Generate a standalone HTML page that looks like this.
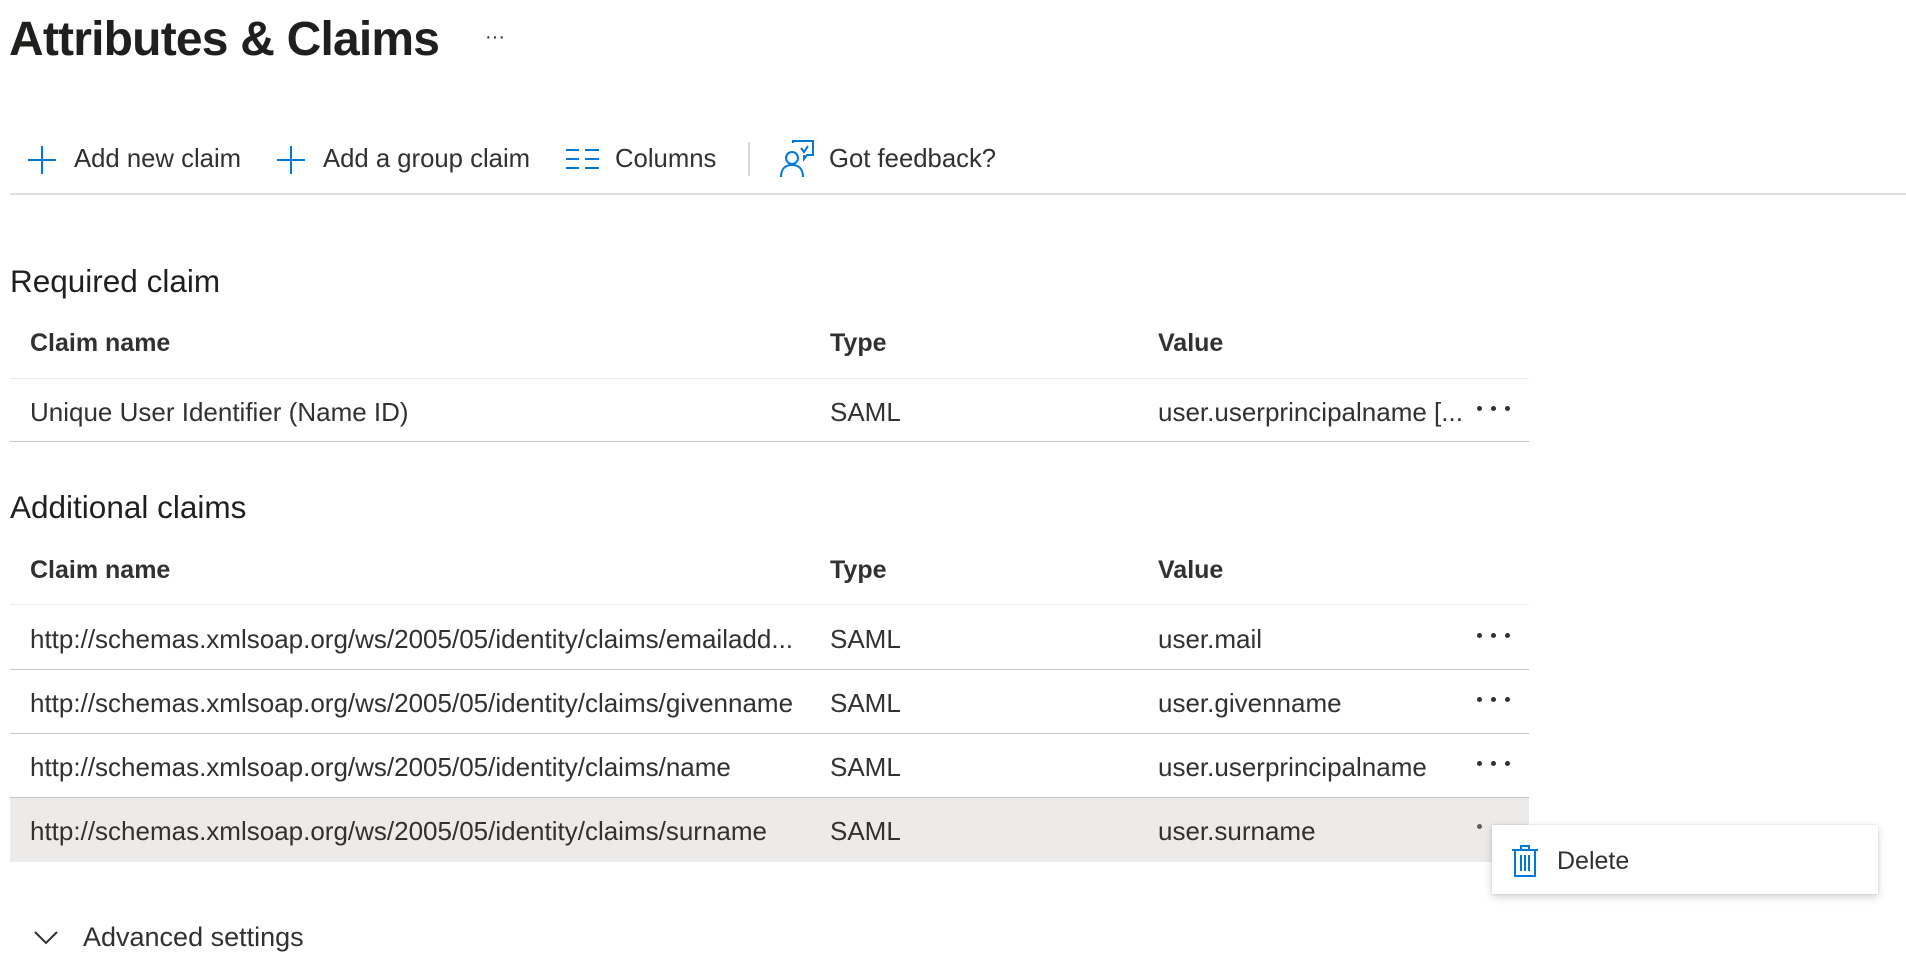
<!DOCTYPE html>
<html><head><meta charset="utf-8">
<style>
*{margin:0;padding:0;box-sizing:border-box}
body{width:1906px;height:978px;background:#fff;position:relative;overflow:hidden;font-family:"Liberation Sans",Arial,sans-serif;color:#323130}
.a{position:absolute;white-space:nowrap}
.t{font-size:26px;line-height:30px}
.h{font-size:25px;font-weight:bold;line-height:30px;color:#323130}
.line{position:absolute;left:10px;width:1519px;height:1px}
.dots{position:absolute;width:34px;height:6px}
.dots i{position:absolute;top:0;width:5px;height:5px;border-radius:50%;background:#323130}
.tb{font-size:25.7px;line-height:30px}
</style></head><body>

<div class="a" style="left:9px;top:10px;font-size:48px;font-weight:bold;color:#201f1e;letter-spacing:-0.8px;line-height:60px">Attributes &amp; Claims</div>
<div class="a" style="left:485px;top:26px;font-size:20px;color:#323130">···</div>

<!-- toolbar -->
<svg class="a" style="left:27px;top:145px" width="30" height="30" viewBox="0 0 30 30"><path d="M15 1V29M1 15H29" stroke="#0078d4" stroke-width="2"/></svg>
<div class="a tb" style="left:74px;top:144px">Add new claim</div>
<svg class="a" style="left:276px;top:145px" width="30" height="30" viewBox="0 0 30 30"><path d="M15 1V29M1 15H29" stroke="#0078d4" stroke-width="2"/></svg>
<div class="a tb" style="left:323px;top:144px">Add a group claim</div>
<svg class="a" style="left:566px;top:148px" width="34" height="22" viewBox="0 0 34 22"><path d="M0 2H13M0 11H13M0 20H13M19 2H33M19 11H33M19 20H33" stroke="#0078d4" stroke-width="2"/></svg>
<div class="a tb" style="left:615px;top:144px">Columns</div>
<div class="a" style="left:748px;top:142px;width:2px;height:34px;background:#d6d6d6"></div>
<svg class="a" style="left:779px;top:140px" width="36" height="38" viewBox="0 0 36 38"><path d="M14 3V1H34V15H28L25 19V15" fill="none" stroke="#0078d4" stroke-width="2"/><path d="M22 8L25 12L29 6" fill="none" stroke="#0078d4" stroke-width="2"/><circle cx="13" cy="18" r="6" fill="none" stroke="#0078d4" stroke-width="2"/><path d="M2 37C2 29 6 25 13 25C20 25 24 29 24 37" fill="none" stroke="#0078d4" stroke-width="2"/></svg>
<div class="a tb" style="left:829px;top:144px">Got feedback?</div>
<div class="a" style="left:10px;top:193px;width:1896px;height:2px;background:#e1dfdd"></div>

<!-- required -->
<div class="a" style="left:10px;top:262px;font-size:31.5px;line-height:38px;color:#201f1e">Required claim</div>
<div class="a h" style="left:30px;top:328px">Claim name</div>
<div class="a h" style="left:830px;top:328px">Type</div>
<div class="a h" style="left:1158px;top:328px">Value</div>
<div class="line" style="top:378px;background:#edebe9"></div>
<div class="a t" style="left:30px;top:397px">Unique User Identifier (Name ID)</div>
<div class="a t" style="left:830px;top:397px">SAML</div>
<div class="a t" style="left:1158px;top:397px">user.userprincipalname [...</div>
<div class="dots" style="left:1477px;top:406px"><i style="left:0"></i><i style="left:14px"></i><i style="left:28px"></i></div>
<div class="line" style="top:441px;background:#c8c6c4"></div>

<!-- additional -->
<div class="a" style="left:10px;top:488px;font-size:31.5px;line-height:38px;color:#201f1e">Additional claims</div>
<div class="a h" style="left:30px;top:555px">Claim name</div>
<div class="a h" style="left:830px;top:555px">Type</div>
<div class="a h" style="left:1158px;top:555px">Value</div>
<div class="line" style="top:604px;background:#edebe9"></div>

<div class="a t" style="left:30px;top:624px">http://schemas.xmlsoap.org/ws/2005/05/identity/claims/emailadd...</div>
<div class="a t" style="left:830px;top:624px">SAML</div>
<div class="a t" style="left:1158px;top:624px">user.mail</div>
<div class="dots" style="left:1477px;top:633px"><i style="left:0"></i><i style="left:14px"></i><i style="left:28px"></i></div>
<div class="line" style="top:669px;background:#c8c6c4"></div>

<div class="a t" style="left:30px;top:688px">http://schemas.xmlsoap.org/ws/2005/05/identity/claims/givenname</div>
<div class="a t" style="left:830px;top:688px">SAML</div>
<div class="a t" style="left:1158px;top:688px">user.givenname</div>
<div class="dots" style="left:1477px;top:697px"><i style="left:0"></i><i style="left:14px"></i><i style="left:28px"></i></div>
<div class="line" style="top:733px;background:#c8c6c4"></div>

<div class="a t" style="left:30px;top:752px">http://schemas.xmlsoap.org/ws/2005/05/identity/claims/name</div>
<div class="a t" style="left:830px;top:752px">SAML</div>
<div class="a t" style="left:1158px;top:752px">user.userprincipalname</div>
<div class="dots" style="left:1477px;top:761px"><i style="left:0"></i><i style="left:14px"></i><i style="left:28px"></i></div>
<div class="line" style="top:797px;background:#c8c6c4"></div>

<div class="a" style="left:10px;top:798px;width:1519px;height:64px;background:#edebe9"></div>
<div class="a t" style="left:30px;top:816px">http://schemas.xmlsoap.org/ws/2005/05/identity/claims/surname</div>
<div class="a t" style="left:830px;top:816px">SAML</div>
<div class="a t" style="left:1158px;top:816px">user.surname</div>
<div class="dots" style="left:1477px;top:824px"><i style="left:0;background:#605e5c"></i></div>

<!-- menu -->
<div class="a" style="left:1492px;top:825px;width:386px;height:69px;background:#fff;box-shadow:0 3px 8px rgba(0,0,0,0.18),0 0 2px rgba(0,0,0,0.12)"></div>
<svg class="a" style="left:1511px;top:845px" width="28" height="32" viewBox="0 0 28 32"><path d="M10 5V1H18V5M1 5H27M4 5V31H24V5M10 10V26M14 10V26M18 10V26" fill="none" stroke="#0078d4" stroke-width="2"/></svg>
<div class="a" style="left:1557px;top:846px;font-size:25px;line-height:30px;color:#323130">Delete</div>

<!-- advanced -->
<svg class="a" style="left:34px;top:930px" width="24" height="16" viewBox="0 0 24 16"><path d="M1 2L12 13L23 2" fill="none" stroke="#323130" stroke-width="2"/></svg>
<div class="a" style="left:83px;top:922px;font-size:27px;line-height:30px">Advanced settings</div>

</body></html>
